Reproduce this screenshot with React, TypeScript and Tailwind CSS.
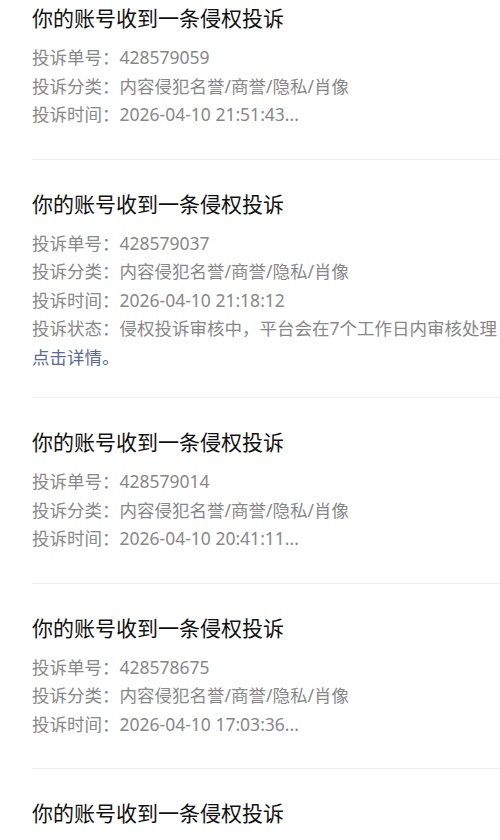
const items = [
  {
    no: "428579059",
    time: "2026-04-10 21:51:43...",
  },
  {
    no: "428579037",
    time: "2026-04-10 21:18:12",
    status: "侵权投诉审核中，平台会在7个工作日内审核处理",
  },
  {
    no: "428579014",
    time: "2026-04-10 20:41:11...",
  },
  {
    no: "428578675",
    time: "2026-04-10 17:03:36...",
  },
  {
    no: "",
    time: "",
  },
];

const font = {
  fontFamily: '"Noto Sans", "Noto Sans CJK SC", sans-serif',
};

function Line({ label, value }: { label: string; value: string }) {
  return (
    <div className="whitespace-nowrap overflow-hidden">
      {label}：{value}
    </div>
  );
}

export default function App() {
  return (
    <div className="w-[500px] h-[840px] overflow-hidden bg-white" style={font}>
      {items.map((it, i) => (
        <div
          key={i}
          className={
            "ml-8 pb-[30px] " +
            (i === 0 ? "pt-1" : "pt-[30px] border-t border-[#efefef]")
          }
        >
          <div className="text-[21px] leading-[28px] text-[#111]">
            你的账号收到一条侵权投诉
          </div>
          {it.no && (
            <div className="mt-[11px] text-[17.5px] leading-[28.5px] text-[#888]">
              <Line label="投诉单号" value={it.no} />
              <Line label="投诉分类" value="内容侵犯名誉/商誉/隐私/肖像" />
              <Line label="投诉时间" value={it.time} />
              {it.status && (
                <>
                  <Line label="投诉状态" value={it.status} />
                  <div className="text-[#576b95] -mb-1">点击详情。</div>
                </>
              )}
            </div>
          )}
        </div>
      ))}
    </div>
  );
}
